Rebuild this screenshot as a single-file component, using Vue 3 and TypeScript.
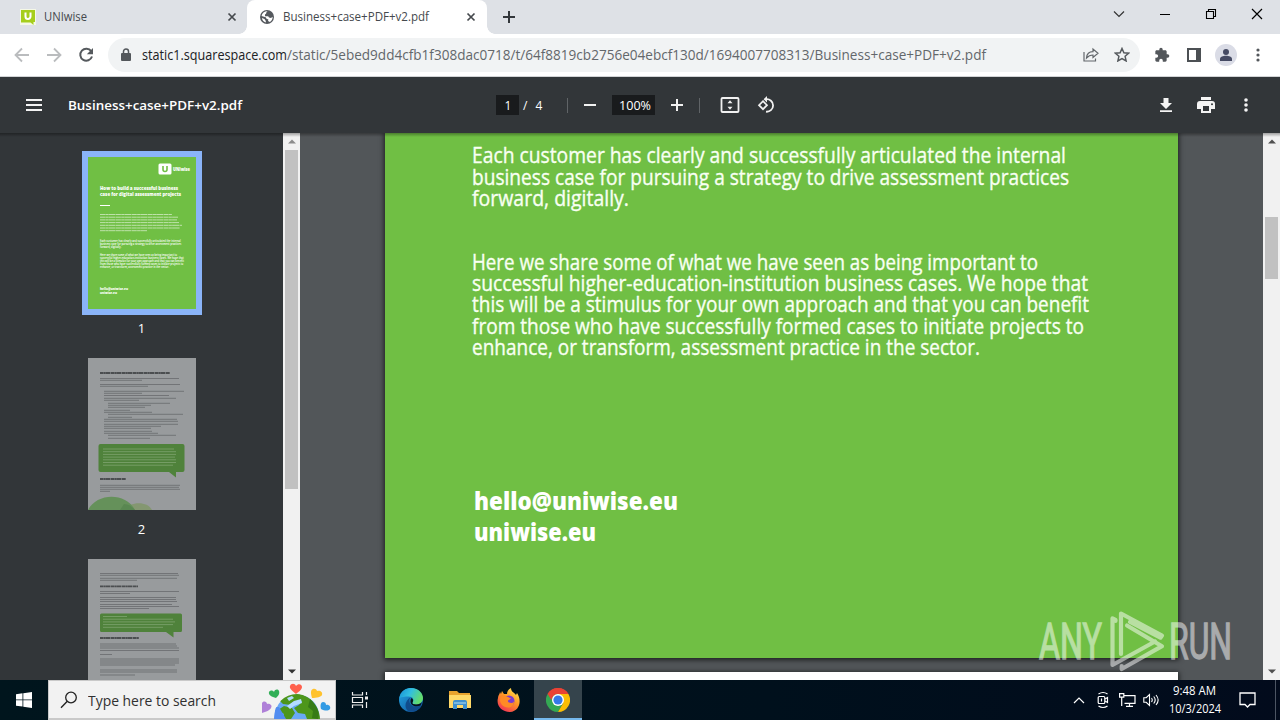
<script setup lang="ts">
import type { Directive } from 'vue'

// Condenses or widens a line of text so that it fills the given width.
const vFit: Directive<HTMLElement, number> = {
  mounted(el, binding) {
    const natural = el.getBoundingClientRect().width
    if (natural > 0) el.style.transform = `scaleX(${binding.value / natural})`
  },
}

interface Line { text: string; width: number }

const intro: Line[] = [
  { text: 'Each customer has clearly and successfully articulated the internal', width: 594 },
  { text: 'business case for pursuing a strategy to drive assessment practices', width: 597 },
  { text: 'forward, digitally.', width: 157 },
]
const summary: Line[] = [
  { text: 'Here we share some of what we have seen as being important to', width: 566 },
  { text: 'successful higher-education-institution business cases. We hope that', width: 616 },
  { text: 'this will be a stimulus for your own approach and that you can benefit', width: 617 },
  { text: 'from those who have successfully formed cases to initiate projects to', width: 612 },
  { text: 'enhance, or transform, assessment practice in the sector.', width: 508 },
]

type Bar = [x: number, y: number, w: number]
const coverBars: Bar[] = [
  [12, 57.5, 72], [12, 60.2, 78], [12, 62.9, 77], [12, 65.6, 79], [12, 68.3, 82], [12, 71, 80], [12, 73.7, 47],
]
const second: Bar[] = [
  [12, 20.5, 79], [12, 22.3, 42], [12, 26.5, 80], [12, 28.3, 48],
  [16, 33.3, 80], [16, 35.3, 38], [16, 37.5, 65], [16, 40.3, 72], [16, 42.3, 35],
  [20, 45.3, 62], [20, 47.3, 43], [20, 49.3, 37], [16, 52.3, 26], [16, 54.3, 48],
  [20, 56.3, 75], [20, 59.3, 24], [16, 61.3, 73], [16, 63.3, 74], [16, 66.3, 74],
  [16, 68.3, 57], [16, 70.3, 47], [16, 73.3, 48], [16, 75.3, 54], [20, 77.3, 68], [20, 80.3, 42],
  [12, 127.3, 80], [12, 129.3, 79], [12, 131.3, 80], [12, 133.3, 10],
]
const secondQuote: Bar[] = [
  [15, 91, 71], [15, 93.7, 73], [15, 96.4, 73], [15, 99.1, 72], [15, 101.8, 73], [15, 104.5, 73], [15, 107.2, 70],
]
const third: Bar[] = [
  [12, 14.5, 78], [12, 16.3, 79], [12, 19.3, 77], [12, 21.3, 37],
  [12, 32.5, 79], [12, 34.5, 30], [12, 38.5, 76], [12, 40.5, 76], [12, 42.5, 77], [12, 45.5, 72], [12, 47.5, 79], [12, 49.5, 49],
  [12, 85, 76], [12, 87, 77], [12, 89, 79], [12, 91.5, 79], [12, 95.5, 12],
  [12, 100, 79], [12, 102, 79], [12, 104, 79], [12, 106, 75], [12, 111, 77], [12, 113, 77], [12, 116, 35],
]
const thirdQuote: Bar[] = [[15, 57.5, 24], [15, 60.2, 70], [15, 62.9, 72], [15, 65.6, 70], [15, 68.3, 60]]
</script>

<template>
  <div class="screen">
    <header class="tabs">
      <div class="tab first">
        <svg class="favicon" width="16" height="16" viewBox="0 0 16 16"><rect width="16" height="16" fill="#f5f8e6" /><path d="M1 1h14v12h-1.500v3l-3-2.500H1z" fill="#a6ce1c" /><path d="M5.500 3.500v4a2.500 2.500 0 0 0 5 0v-4" fill="none" stroke="#fff" stroke-width="2" /></svg>
        <span v-fit="43" class="fit tab-title">UNIwise</span>
        <svg class="close" width="10" height="10" viewBox="0 0 10 10"><path d="M1.500 1.500l7 7M8.500 1.500l-7 7" stroke="#45494d" stroke-width="1.700" /></svg>
      </div>
      <div class="tab active">
        <svg class="favicon" width="14" height="14" viewBox="0 0 14 14"><circle cx="7" cy="7" r="7" fill="#55595e" /><path d="M7.500 1.300c-1 1-1.500 1.300-1.300 2.200L5 4.600v1.600h3.200l.8 1.400 2 .3 1.600-1.200c.3 2-1 4.300-2.700 5.200L8 11l.4-1.600-1.900-.7L5.700 7.300 1.600 5.900C2 3.300 4.500 1.200 7.500 1.300zM2 8l2.500 1 1.300 2v1.500C3.500 12 2 10 2 8z" fill="#fff" /></svg>
        <span v-fit="146" class="fit tab-title">Business+case+PDF+v2.pdf</span>
        <svg class="close" width="10" height="10" viewBox="0 0 10 10"><path d="M1.500 1.500l7 7M8.500 1.500l-7 7" stroke="#45494d" stroke-width="1.700" /></svg>
      </div>
      <svg class="plus" width="12" height="12" viewBox="0 0 12 12"><path d="M6 0v12M0 6h12" stroke="#33373b" stroke-width="2" /></svg>
      <div class="window-controls">
        <svg width="12" height="12" viewBox="0 0 12 12"><path d="M1 3.500l5 5 5-5" fill="none" stroke="#333" stroke-width="1.200" /></svg>
        <svg width="12" height="12" viewBox="0 0 12 12"><path d="M1 6.500h10" stroke="#000" /></svg>
        <svg width="12" height="12" viewBox="0 0 12 12"><path d="M1.500 3.500h7v7h-7zM3.500 3.500v-2h7v7h-2" fill="none" stroke="#000" stroke-width="1.100" /></svg>
        <svg width="12" height="12" viewBox="0 0 12 12"><path d="M1 1l10 10M11 1L1 11" stroke="#000" stroke-width="1.200" /></svg>
      </div>
    </header>

    <nav class="address-row">
      <div class="nav-icons">
        <svg width="16" height="16" viewBox="0 0 16 16"><path d="M15 8H2M8 1.500L1.500 8 8 14.500" fill="none" stroke="#babcbe" stroke-width="1.800" /></svg>
        <svg width="16" height="16" viewBox="0 0 16 16"><path d="M1 8h13M8 1.500L14.500 8 8 14.500" fill="none" stroke="#babcbe" stroke-width="1.800" /></svg>
        <svg width="16" height="16" viewBox="0 0 16 16"><path d="M13.200 4.200A6 6 0 1 0 14 9.500" fill="none" stroke="#55595d" stroke-width="2" /><path d="M15 1v6.200H8.800z" fill="#55595d" /></svg>
      </div>
      <div class="omnibox">
        <svg class="lock" width="10" height="14" viewBox="0 0 10 14"><path d="M2.500 5.500V3.500a2.500 2.500 0 0 1 5 0v2" fill="none" stroke="#53575b" stroke-width="1.500" /><rect y="5" width="10" height="8" rx="1" fill="#53575b" /></svg>
        <span v-fit="145" class="fit domain">static1.squarespace.com</span>
        <span v-fit="699" class="fit path">/static/5ebed9dd4cfb1f308dac0718/t/64f8819cb2756e04ebcf130d/1694007708313/Business+case+PDF+v2.pdf</span>
        <svg class="share" width="16" height="15" viewBox="0 0 16 15"><path d="M1 5v9h11.500v-2.500M3.500 11c.3-4 2.800-6.300 6.500-6.300V2l5 4.300-5 4.200V8C7.300 8 5.500 8.800 3.500 11z" fill="none" stroke="#63676b" stroke-width="1.200" /></svg>
        <svg class="star" width="16" height="15" viewBox="0 0 16 15"><path d="M8 1.500l1.900 4.300 4.700.4-3.500 3.100 1 4.600L8 11.500l-4.100 2.400 1-4.600L1.400 6.200l4.700-.4z" fill="none" stroke="#55595d" stroke-width="1.500" /></svg>
      </div>
      <div class="actions">
        <svg width="16" height="16" viewBox="0 0 24 24"><path d="M20.500 11H19V7c0-1.100-.9-2-2-2h-4V3.500a2.500 2.500 0 0 0-5 0V5H4c-1.100 0-2 .9-2 2v3.800h1.500a2.700 2.700 0 0 1 0 5.400H2V20c0 1.100.9 2 2 2h3.800v-1.500a2.700 2.700 0 0 1 5.400 0V22H17c1.100 0 2-.9 2-2v-4h1.500a2.500 2.500 0 0 0 0-5z" fill="#53575b" /></svg>
        <svg width="14" height="14" viewBox="0 0 14 14"><path d="M1 1h12v12H1z" fill="none" stroke="#4c5054" stroke-width="2" /><path d="M9 1h4v12H9z" fill="#4c5054" /></svg>
        <svg width="22" height="22" viewBox="0 0 22 22"><circle cx="11" cy="11" r="11" fill="#dadce6" /><circle cx="11" cy="8" r="3" fill="#454a63" /><path d="M5 17v-2c0-2 3-3.200 6-3.200s6 1.200 6 3.200v2z" fill="#454a63" /></svg>
        <svg width="4" height="14" viewBox="0 0 4 14"><g fill="#53575b"><circle cx="2" cy="2" r="1.600" /><circle cx="2" cy="7" r="1.600" /><circle cx="2" cy="12" r="1.600" /></g></svg>
      </div>
    </nav>

    <div class="pdf-bar">
      <svg class="burger" width="16" height="12" viewBox="0 0 16 12"><path d="M0 1h16M0 6h16M0 11h16" stroke="#f4f4f4" stroke-width="2" /></svg>
      <span v-fit="174" class="fit doc-title">Business+case+PDF+v2.pdf</span>
      <span class="page-now">1</span>
      <span class="page-of">/<span>4</span></span>
      <i class="rule" />
      <svg class="minus" width="12" height="12" viewBox="0 0 12 12"><path d="M0 6h12" stroke="#f1f1f1" stroke-width="2" /></svg>
      <span class="zoom"><span v-fit="32" class="fit">100%</span></span>
      <svg class="more" width="12" height="12" viewBox="0 0 12 12"><path d="M6 0v12M0 6h12" stroke="#f1f1f1" stroke-width="2" /></svg>
      <i class="rule second-rule" />
      <svg class="fit-page" width="20" height="16" viewBox="0 0 20 16"><rect x="1.500" y="1" width="17" height="14" rx="1" fill="none" stroke="#f1f1f1" stroke-width="1.800" /><path d="M10 3.300l2.500 2.900h-5zM10 12.700l2.500-2.900h-5z" fill="#f1f1f1" /></svg>
      <svg class="rotate" width="18" height="18" viewBox="0 0 18 18"><path d="M6 5.200L10 9.200l-4 4-4-4z" fill="none" stroke="#f1f1f1" stroke-width="1.700" /><path d="M9 3.200a6.300 6.300 0 1 1 0 12.500" fill="none" stroke="#f1f1f1" stroke-width="1.800" /><path d="M10 0v6.400L6.600 3.200z" fill="#f1f1f1" /></svg>
      <div class="pdf-actions">
        <svg width="14" height="16" viewBox="0 0 14 16"><path d="M4.500 1h5v5H13l-6 6-6-6h3.500zM1 13.300h12v1.800H1z" fill="#f4f4f4" /></svg>
        <svg width="18" height="16" viewBox="0 0 18 16"><path d="M4 0h10v3H4zM3 4h12a3 3 0 0 1 3 3v5h-4v4H4v-4H0V7a3 3 0 0 1 3-3z" fill="#f4f4f4" /><path d="M6 9h6v5H6z" fill="#323639" /><circle cx="15" cy="7.200" r="1" fill="#323639" /></svg>
        <svg width="4" height="14" viewBox="0 0 4 14"><g fill="#f4f4f4"><circle cx="2" cy="2" r="1.800" /><circle cx="2" cy="7" r="1.800" /><circle cx="2" cy="12" r="1.800" /></g></svg>
      </div>
    </div>

    <main class="viewer">
      <aside class="thumbs">
        <div class="thumb selected">
          <svg width="108" height="152" viewBox="0 0 108 152">
            <rect width="108" height="152" fill="#70bf44" />
            <rect x="70.500" y="6.500" width="13" height="11" rx="1.500" fill="#fff" />
            <path d="M75 9v3.500a2 2 0 0 0 4 0V9" fill="none" stroke="#70bf44" stroke-width="1.600" />
            <g fill="#fff" font-family="'Open Sans', sans-serif" font-weight="800">
              <text x="85" y="14" font-size="4.500" textLength="17" lengthAdjust="spacingAndGlyphs">UNIwise</text>
              <text x="12" y="32.500" font-size="5" textLength="78" lengthAdjust="spacingAndGlyphs">How to build a successful business</text>
              <text x="12" y="38.500" font-size="5" textLength="81" lengthAdjust="spacingAndGlyphs">case for digital assessment projects</text>
              <text x="12" y="132.500" font-size="3.500" textLength="28" lengthAdjust="spacingAndGlyphs">hello@uniwise.eu</text>
              <text x="12" y="136.500" font-size="3.500" textLength="17" lengthAdjust="spacingAndGlyphs">uniwise.eu</text>
            </g>
            <rect x="12" y="48" width="10" height="1" fill="#fff" />
            <g class="tiny-bars light"><path v-for="b in coverBars" :key="b[1]" :d="`M${b[0]} ${b[1]}h${b[2]}`" /></g>
            <g fill="#fff" font-family="'Open Sans', sans-serif" font-size="2.900" font-weight="600">
              <text v-for="(l, i) in intro" :key="i" x="12" :y="85 + i * 2.9" :textLength="l.width * 0.136" lengthAdjust="spacingAndGlyphs">{{ l.text }}</text>
              <text v-for="(l, i) in summary" :key="i + 9" x="12" :y="99 + i * 2.9" :textLength="l.width * 0.136" lengthAdjust="spacingAndGlyphs">{{ l.text }}</text>
            </g>
          </svg>
        </div>
        <span class="number n1">1</span>
        <svg class="thumb" width="108" height="152" viewBox="0 0 108 152">
          <rect width="108" height="152" fill="#989b9d" />
          <path class="tiny-heading" d="M12 15h70M12 121h26" />
          <g class="tiny-bars dark"><path v-for="b in second" :key="b[1]" :d="`M${b[0]} ${b[1]}h${b[2]}`" /></g>
          <path d="M12.500 86h82a2 2 0 0 1 2 2v24a2 2 0 0 1-2 2H88v5.500L81 114H12.500a2 2 0 0 1-2-2V88a2 2 0 0 1 2-2z" fill="#4f823b" />
          <g class="tiny-bars quote"><path v-for="b in secondQuote" :key="b[1]" :d="`M${b[0]} ${b[1]}h${b[2]}`" /></g>
          <path d="M36 152c5-8 23-10 28 0z" fill="#849771" /><path d="M0 152c9-17 37-18 47 0z" fill="#65915a" /><path d="M36 146c4 0 8 2 11 6H32z" fill="#598751" />
        </svg>
        <span class="number n2">2</span>
        <svg class="thumb" width="108" height="152" viewBox="0 0 108 152">
          <rect width="108" height="152" fill="#989b9d" />
          <path class="tiny-heading" d="M12 27.300h38M12 79h39" />
          <g class="tiny-bars dark"><path v-for="b in third" :key="b[1]" :d="`M${b[0]} ${b[1]}h${b[2]}`" /></g>
          <path d="M13.500 54.500h79a1.500 1.500 0 0 1 1.500 1.500v15.500a1.500 1.500 0 0 1-1.500 1.500H85.500v5.500L78 73H13.500a1.500 1.500 0 0 1-1.500-1.500V56a1.500 1.500 0 0 1 1.500-1.500z" fill="#4f823b" />
          <g class="tiny-bars quote"><path v-for="b in thirdQuote" :key="b[1]" :d="`M${b[0]} ${b[1]}h${b[2]}`" /></g>
        </svg>
      </aside>
      <div class="scrollbar left-scroll">
        <svg width="8" height="5" viewBox="0 0 8 5"><path d="M0 4.500L4 .5l4 4z" fill="#8c8c8c" /></svg>
        <div class="handle" />
        <svg width="8" height="5" viewBox="0 0 8 5"><path d="M0 .5h8l-4 4z" fill="#333" /></svg>
      </div>
      <section class="canvas">
        <article class="page">
          <p class="copy"><span v-for="l in intro" :key="l.text" v-fit="l.width" class="fit">{{ l.text }}</span></p>
          <p class="copy next"><span v-for="l in summary" :key="l.text" v-fit="l.width" class="fit">{{ l.text }}</span></p>
          <p class="contact"><span v-fit="204" class="fit">hello@uniwise.eu</span><span v-fit="122" class="fit">uniwise.eu</span></p>
        </article>
        <article class="page following" />
      </section>
      <div class="scrollbar right-scroll">
        <svg width="8" height="5" viewBox="0 0 8 5"><path d="M0 4.500L4 .5l4 4z" fill="#505050" /></svg>
        <div class="handle" />
        <svg width="8" height="5" viewBox="0 0 8 5"><path d="M0 .5h8l-4 4z" fill="#505050" /></svg>
      </div>
      <div class="top-shade" />
    </main>

    <svg class="watermark" width="204" height="70" viewBox="0 0 204 70">
      <g opacity=".5" fill="#fff" stroke="#fff" stroke-width="1.300" font-family="Roboto, sans-serif" font-weight="400" font-size="50">
        <text x="3" y="50.500" textLength="63" lengthAdjust="spacingAndGlyphs">ANY</text>
        <text x="133" y="50.500" textLength="63" lengthAdjust="spacingAndGlyphs">RUN</text>
      </g>
      <g opacity=".5" fill="none" stroke="#fff" stroke-width="4.200" stroke-linejoin="round" stroke-linecap="round">
        <path d="M85 46V5.500L126 27.500l-1.600 2.200L94 14" />
        <path d="M91 17.500L126 38.200 85.700 61v-3" />
        <path d="M79.500 13v-1l-3-1.500V57L119 33.500" />
      </g>
    </svg>

    <footer class="taskbar">
      <div class="start"><svg width="16" height="16" viewBox="0 0 16 16"><path d="M0 2.200l6.500-.9v6.200H0zM7.300 1.200L16 0v7.500H7.300zM0 8.300h6.500v6.300L0 13.700zM7.300 8.300H16V16l-8.700-1.200z" fill="#fff" /></svg></div>
      <div class="search">
        <svg width="18" height="18" viewBox="0 0 18 18"><circle cx="11" cy="6.500" r="5.300" fill="none" stroke="#222" stroke-width="1.300" /><path d="M7.300 10.300L1 16.800" stroke="#222" stroke-width="1.400" /></svg>
        <span v-fit="128" class="fit">Type here to search</span>
        <svg class="globe" width="76" height="38" viewBox="0 0 76 38">
          <defs><clipPath id="earth"><circle cx="37" cy="36" r="23" /></clipPath></defs>
          <circle cx="37" cy="36" r="22.500" fill="#69a9f5" />
          <g clip-path="url(#earth)"><path d="M20 18c8-8 21-7 30 0 6 5 10 13 10 20H47l-2-5-7-1-4-5 5-3 3-4-9 1-2 3-8-1-3-3zM24 25l8 2 3 5-4 6H22l2-5-6-4z" fill="#4d961b" /><path d="M50 18c8 7 10 15 8 20l-6-1 1-7-5-4z" fill="#367b16" /><path d="M27 17l5-2 2 2-5 3zM34 20l7-2 1 4-8 3-4 3-3-3z" fill="#b4dcff" /><path d="M15 26l4 0 7 12H14z" fill="#538df0" /></g>
          <path d="M36 13c-3-3-7-5-6-8 1-3 5-3 6 0 2-3 6-2 6 1 0 3-4 5-6 7z" fill="#ff604d" />
          <path d="M16 17c-4-1-8-3-7-6 1-2 4-2 5 0 1-3 4-3 5-1 1 3-1 5-3 7z" fill="#32af58" />
          <path d="M52 17c-1-4-2-8 1-9 2-1 4 1 4 2 3-1 6 1 5 4-1 2-5 3-10 3z" fill="#ffc22d" />
          <path d="M2 32V22c2-3 5-1 5 1 2-1 6 1 4 4-1 2-5 4-9 5z" fill="#af80d8" />
          <path d="M61 28c-1-4 0-7 2-7 2 0 3 1 3 3 3-1 5 2 4 4-2 2-5 2-9 0z" fill="#329be4" />
        </svg>
      </div>
      <div class="task"><svg width="18" height="18" viewBox="0 0 18 18"><path d="M1.500 1v3h10V1M1.500 17v-3h10v3M1.500 6.500h10v5h-10z" fill="none" stroke="#eee" stroke-width="1.200" /><path d="M15.500 1v3M15.500 11v6" stroke="#eee" stroke-width="1.200" /><path d="M14 5.500h3v3h-3z" fill="#eee" /></svg></div>
      <div class="task edge"><svg width="24" height="24" viewBox="0 0 24 24"><defs><linearGradient id="wave" x2="1" y2=".4"><stop stop-color="#168fd6" /><stop offset=".5" stop-color="#32bfe0" /><stop offset="1" stop-color="#63dc6d" /></linearGradient><linearGradient id="deep" x2="1" y2="1"><stop stop-color="#24a8e4" /><stop offset="1" stop-color="#0c4c98" /></linearGradient></defs><circle cx="12" cy="12" r="12" fill="url(#deep)" /><path d="M.3 10C2 2 8 0 12 0c8 0 12 6 12 10 0 4-3 6.500-7 6.500-3 0-4-1-3.500-2 2-3 .4-6-4-6C6 8.500 2 9 .3 10z" fill="url(#wave)" /><path d="M12 9c-4 4 0 10.500 6 9.500 2 0 3.500-.7 4.500-1.200C20 22 15 24.500 10 23.500 5 21 5 13 12 9z" fill="#104c8c" /><path d="M12.500 10c2 1 2 3 1 4.500-.6 1.200 1 2 3.500 2 3 0 5-1 6-2.500l-1.500 3.500c-5 2-10 0-10-4 0-1.500.2-2.500 1-3.500z" fill="#07121b" /></svg></div>
      <div class="task files"><svg width="22" height="20" viewBox="0 0 22 20"><path d="M0 1h8l2 2h11v6H0z" fill="#e8a32e" /><path d="M0 5h22v13H0z" fill="#ffd968" /><path d="M4 19v-7a2 2 0 0 1 2-2h10a2 2 0 0 1 2 2v7h-4v-4H8v4z" fill="#3e91cf" /><path d="M5 12h12v2H5z" fill="#79b9df" /></svg></div>
      <div class="task fox"><svg width="24" height="24" viewBox="0 0 24 24"><defs><linearGradient id="flame" x1=".8" x2=".2" y2="1"><stop stop-color="#ffe34f" /><stop offset=".45" stop-color="#ff9726" /><stop offset="1" stop-color="#f12b59" /></linearGradient></defs><path d="M5 3l2 3h3c0-3 2-5 4-6 0 4 3 4 5 7l1-2c5 7 3 18-7 19C4 24-1 17 1 10c0-3 2-4 2-6l1 2z" fill="url(#flame)" /><circle cx="12" cy="13" r="5.500" fill="#7a3bd0" /><path d="M4 8c3-1 5 0 7 1l3 1.500-3 2c-1 2 4 4 6 1 0 4-3 6-6 6-5 0-8-4-8-8z" fill="#ff8b25" /></svg></div>
      <div class="task chrome"><svg width="24" height="24" viewBox="0 0 24 24"><path d="M12 12L1.600 6A12 12 0 0 1 22.400 6z" fill="#e94235" /><path d="M12 12L1.600 6A12 12 0 0 0 12 24l5.200-9z" fill="#34a853" /><path d="M12 24A12 12 0 0 0 22.400 6H12l5.200 9z" fill="#fbbd05" /><path d="M1.600 6L6.800 15l3-3 2.200-6z" fill="#34a853" /><path d="M1.600 6A12 12 0 0 1 22.400 6H12a6 6 0 0 0-5.200 3l-1.500 3z" fill="#e94235" /><circle cx="12" cy="12" r="6" fill="#fff" /><circle cx="12" cy="12" r="4.600" fill="#3479e8" /></svg></div>
      <div class="tray">
        <svg width="12" height="8" viewBox="0 0 12 8"><path d="M1 7l5-5 5 5" fill="none" stroke="#fff" stroke-width="1.200" /></svg>
        <svg width="12" height="18" viewBox="0 0 12 18"><g fill="none" stroke="#fff" stroke-width="1.200"><rect x="1.200" y="5.500" width="6.600" height="7" rx="1" /><path d="M8 8l2.500-1.500v5L8 10M1.500 3q4.500-3 9 0M1.500 15q4.500 3 9 0M4.500 7.500v3" /></g></svg>
        <svg width="17" height="14" viewBox="0 0 17 14"><g fill="none" stroke="#fff" stroke-width="1.200"><path d="M5 2.600h11v7.800H5.500M10.500 10.500v3M7 13.400h7M.6.6h4.200v3.500H.6zM2.700 4v9" /></g></svg>
        <svg width="17" height="14" viewBox="0 0 17 14"><path d="M.8 4.700h2.400L6.500 1.500v11L3.200 9.300H.8zM8.500 5q1.500 2 0 4M10.700 3.500q3 3.500 0 7M13 2q4.300 5 0 10" fill="none" stroke="#fff" stroke-width="1.100" /></svg>
        <div class="clock"><span v-fit="43" class="fit">9:48 AM</span><span v-fit="52" class="fit">10/3/2024</span></div>
        <svg class="notice" width="17" height="16" viewBox="0 0 17 16"><path d="M1 1h15v11.500h-5L8.500 15 6 12.500H1z" fill="none" stroke="#fff" stroke-width="1.300" /></svg>
      </div>
    </footer>
  </div>
</template>

<style>
html, body { margin: 0; overflow: hidden; }
</style>

<style scoped>
.screen { position: relative; width: 1280px; height: 720px; display: flex; flex-direction: column; overflow: hidden; font: 12px/16px "Open Sans", "Noto Sans", sans-serif; background: #fff; }
svg { display: block; flex: none; }
.fit { display: inline-block; flex: none; white-space: nowrap; transform-origin: 0 50%; }

.tabs { height: 34px; flex: none; display: flex; align-items: center; background: #dee1e6; position: relative; }
.tab { height: 34px; display: flex; align-items: center; box-sizing: border-box; position: relative; }
.tab.first { width: 247px; padding-left: 20px; }
.tab-title { margin-left: 8px; color: #45494d; width: max-content; }
.tab .close { position: absolute; right: 10px; top: 12px; }
.tab.active { width: 240px; padding-left: 13px; background: #fff; border-radius: 8px 8px 0 0; }
.tab.active::before, .tab.active::after { content: ""; position: absolute; bottom: 0; width: 8px; height: 8px; }
.tab.active::before { left: -8px; background: radial-gradient(circle at 0 0, transparent 7.5px, #fff 8px); }
.tab.active::after { right: -8px; background: radial-gradient(circle at 100% 0, transparent 7.5px, #fff 8px); }
.tab.active .tab-title { margin-left: 9px; }
.tab.active .close { right: 11px; }
.plus { margin-left: 16px; }
.window-controls { display: flex; gap: 34px; margin-left: auto; padding: 0 17px 6px 0; }

.address-row { height: 43px; flex: none; box-sizing: border-box; border-bottom: 1px solid #d2d4d6; display: flex; align-items: center; padding-bottom: 1px; }
.nav-icons { display: flex; gap: 16px; padding-left: 14px; width: 94px; }
.omnibox { width: 1032px; height: 34px; border-radius: 17px; background: #f1f3f4; display: flex; align-items: center; position: relative; font-size: 14px; line-height: 20px; }
.lock { margin: 0 16px 0 13px; width: 10px; }
.domain { color: #202124; position: absolute; left: 34px; top: 7px; }
.path { color: #63676b; position: absolute; left: 179px; top: 7px; }
.share { margin-left: 936px; }
.star { margin-left: 15px; }
.actions { display: flex; align-items: center; padding-left: 14px; gap: 17px; }
.actions svg:nth-child(3) { margin-left: -3px; }
.actions svg:nth-child(4) { margin-left: 2px; }

.pdf-bar { height: 56px; flex: none; display: flex; align-items: center; background: #323639; color: #fff; position: relative; z-index: 2; }
.burger { margin-left: 26px; }
.doc-title { margin-left: 26px; width: max-content; font-size: 13px; font-weight: 600; }
.page-now { position: absolute; left: 496px; width: 23px; height: 20px; background: #191b1d; text-align: center; line-height: 21px; text-indent: 1px; }
.page-of { position: absolute; left: 523px; line-height: 21px; display: flex; gap: 8px; }
.rule { position: absolute; left: 567px; width: 1px; height: 15px; background: #606467; }
.second-rule { left: 699px; }
.minus { position: absolute; left: 584px; }
.zoom { position: absolute; left: 612px; width: 43px; height: 20px; background: #191b1d; line-height: 21px; box-sizing: border-box; padding-left: 7px; }
.more { position: absolute; left: 671px; }
.fit-page { position: absolute; left: 720px; }
.rotate { position: absolute; left: 757px; top: 19px; }
.pdf-actions { display: flex; align-items: center; margin-left: auto; gap: 24px; padding-right: 32px; }
.pdf-actions svg:last-child { margin-left: 5px; }

.viewer { height: 547px; flex: none; display: flex; position: relative; overflow: hidden; background: #525659; }
.top-shade { position: absolute; inset: 0 0 auto; height: 4px; background: linear-gradient(rgba(0, 0, 0, .34), transparent); }
.thumbs { width: 283px; flex: none; background: #323639; color: #fff; display: flex; flex-direction: column; align-items: center; padding-top: 18px; box-sizing: border-box; overflow: hidden; }
.thumb { flex: none; }
.thumb.selected { border: 6px solid #8ab4f8; }
.number { flex: none; width: 12px; text-align: center; font-size: 13px; line-height: 17px; }
.n1 { margin: 5px 0 21px; }
.n2 { margin: 11px 0 21px; }
.tiny-bars { fill: none; stroke-width: 1; }
.light { stroke: rgba(255, 255, 255, .55); stroke-dasharray: 5 .3 3 .2 7 .4; }
.dark { stroke: rgba(50, 53, 55, .42); stroke-width: .9; }
.quote { stroke: rgba(190, 210, 180, .35); }
.tiny-heading { fill: none; stroke: #4b4e50; stroke-width: 1.8; stroke-dasharray: 3 .3 2 .2 5 .5; }

.scrollbar { width: 17px; flex: none; background: #f1f1f1; display: flex; flex-direction: column; align-items: center; justify-content: space-between; box-sizing: border-box; padding: 6px 0; position: relative; }
.handle { position: absolute; left: 2px; width: 13px; background: #c1c1c1; }
.left-scroll .handle { top: 17px; height: 339px; }
.right-scroll .handle { top: 84px; height: 62px; }
.canvas { flex: 1; padding-left: 85px; overflow: hidden; }
.page { width: 793px; height: 525px; background: #70bf44; box-shadow: 0 1px 5px 1px rgba(0, 0, 0, .65); box-sizing: border-box; padding: 12.300px 0 0 87px; color: #f8fff2; }
.page.following { height: 20px; margin-top: 14px; background: #fff; }
.copy { margin: 0; display: flex; flex-direction: column; align-items: flex-start; font-size: 21px; line-height: 21.300px; -webkit-text-stroke: .35px #f8fff2; }
.copy.next { margin-top: 42.700px; }
.contact { margin: 126.500px 0 0 1.500px; display: flex; flex-direction: column; align-items: flex-start; font-size: 25px; line-height: 31px; font-weight: 800; color: #fff; }

.watermark { position: absolute; left: 1036px; top: 608px; z-index: 3; }

.taskbar { height: 40px; flex: none; display: flex; background: linear-gradient(90deg, #00151d, #00101c 60%, #020b1c); color: #fff; }
.start { width: 48px; display: flex; align-items: center; justify-content: center; }
.search { width: 288px; box-sizing: border-box; border: 1px solid #c9c9c9; border-width: 1px 1px 2px; background: #f2f2f2; color: #303030; display: flex; align-items: center; padding-left: 11px; position: relative; font-size: 15px; line-height: 20px; }
.search .fit { margin-left: 10px; }
.globe { position: absolute; right: -1px; top: 0; }
.task { width: 48px; display: flex; align-items: center; justify-content: center; }
.edge { margin-left: 3px; }
.files, .fox { width: 49px; }
.chrome { width: 48px; margin-left: 1px; background: #35444c; box-sizing: border-box; border-bottom: 2px solid #76b9ed; padding-top: 2px; }
.tray { margin-left: auto; display: flex; align-items: center; gap: 9px; padding-right: 24px; position: relative; }
.tray > svg:nth-child(1) { margin-right: 3px; }
.tray > svg:nth-child(2) { margin-right: 1px; }
.tray > svg:nth-child(3) { margin-right: -2px; }
.clock { width: 52px; display: flex; flex-direction: column; align-items: flex-start; line-height: 18px; font-size: 12px; margin-top: -1px; }
.clock .fit:first-child { margin-left: 4px; }
.notice { margin-left: 9px; }
.tray::after { content: ""; position: absolute; right: 4px; top: 0; width: 1px; height: 40px; background: #4c5563; }
</style>
